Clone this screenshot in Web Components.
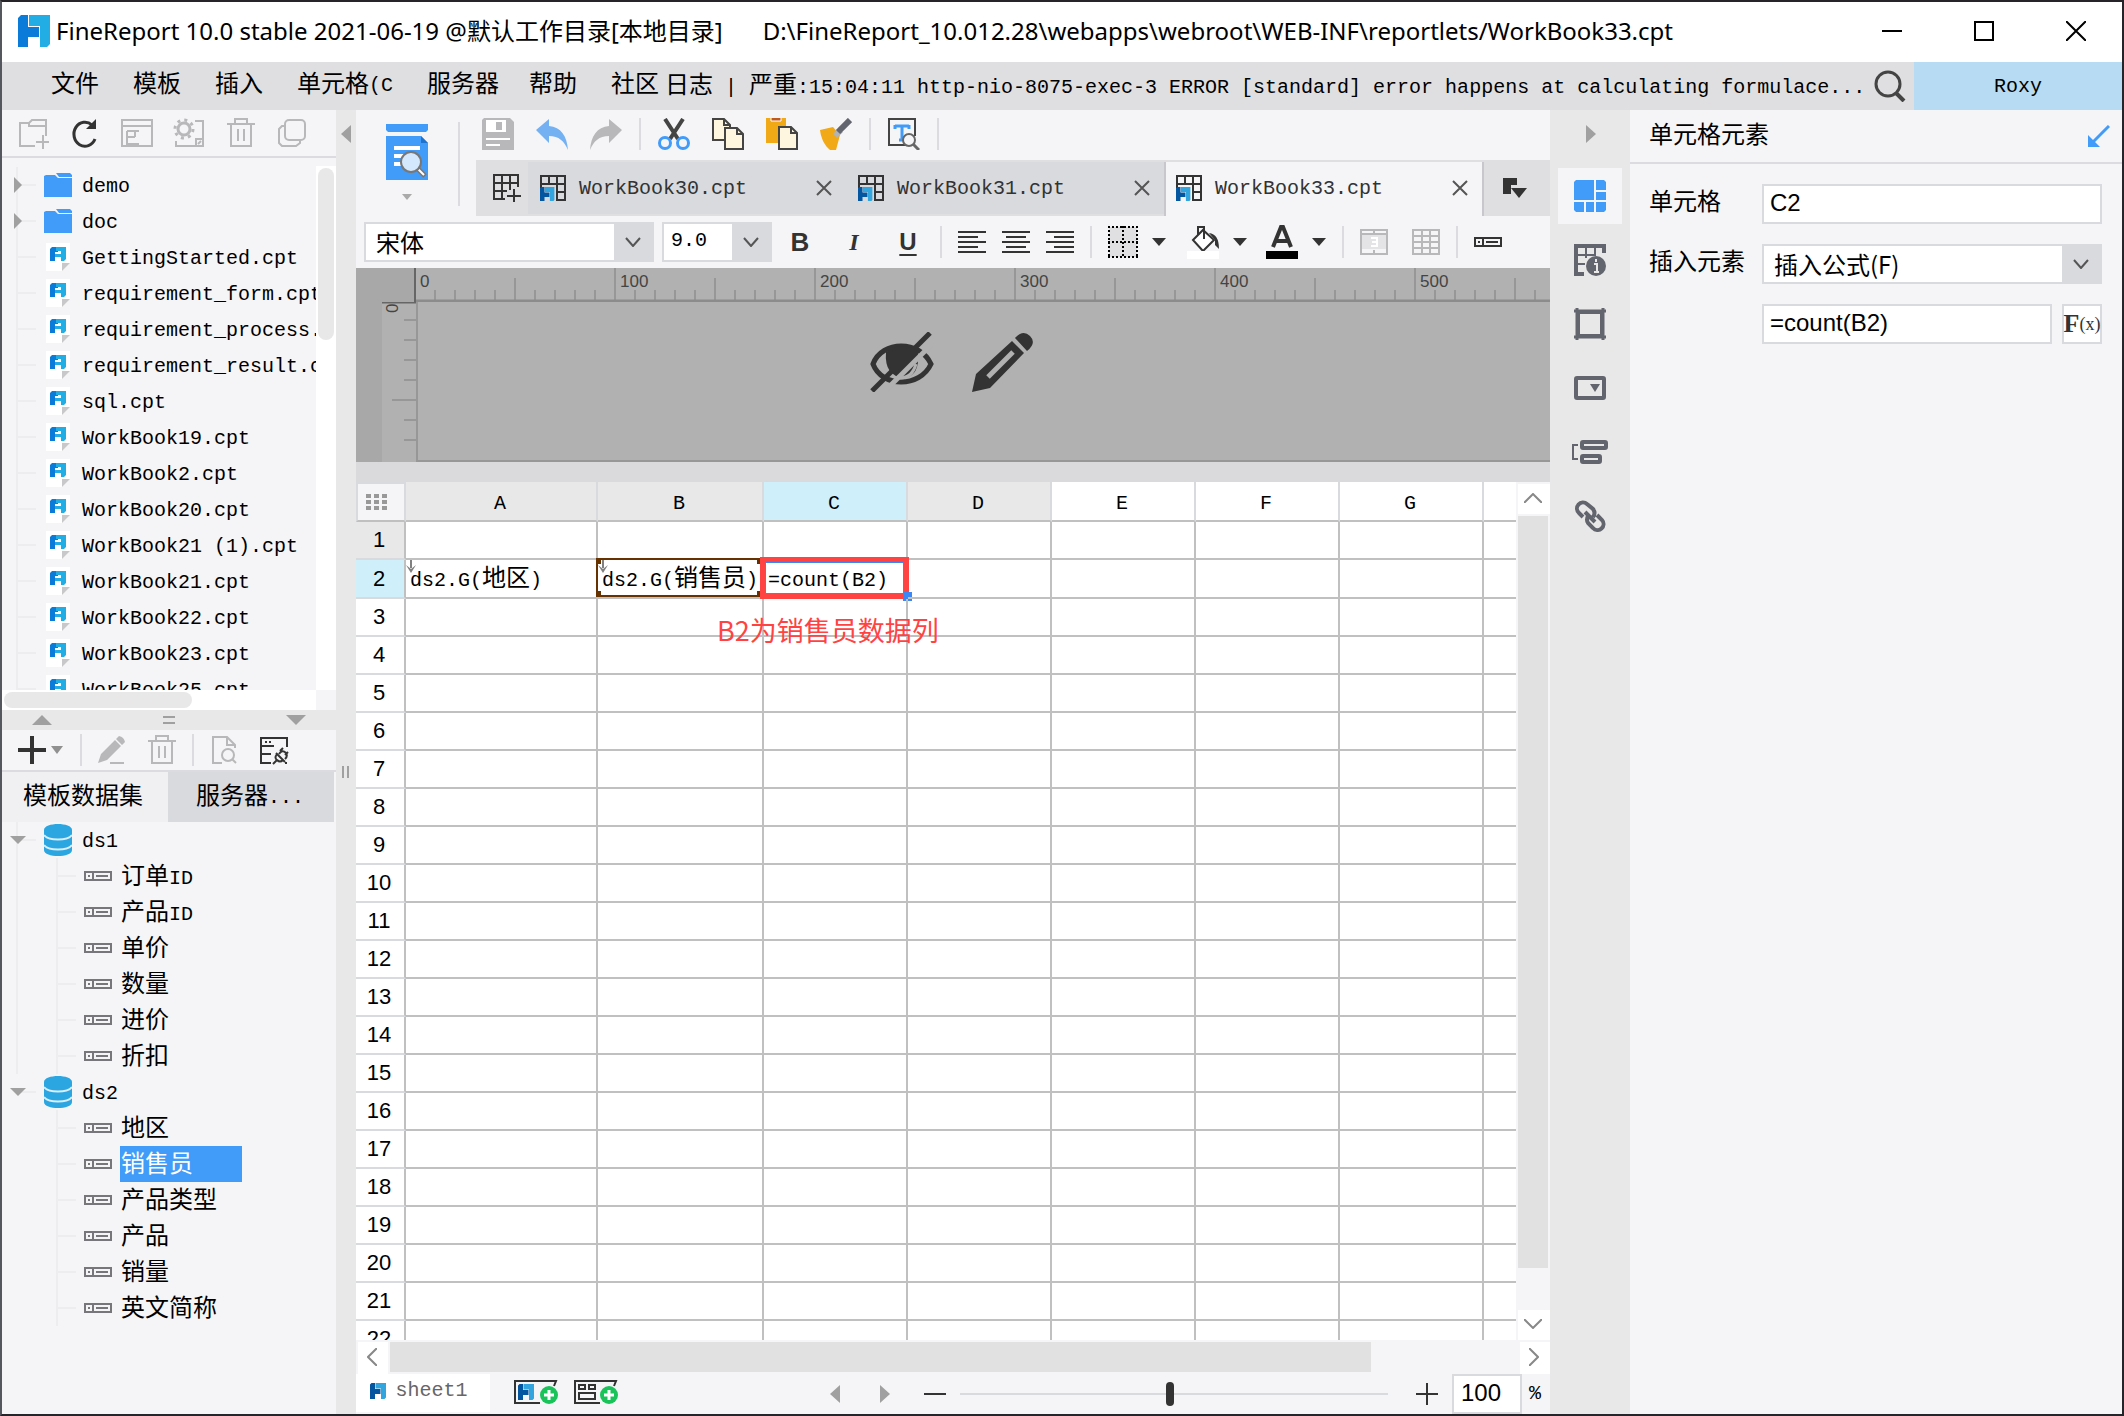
<!DOCTYPE html>
<html lang="zh-CN">
<head>
<meta charset="utf-8">
<title>FineReport</title>
<style>
  html, body { margin: 0; height: 100%; background: #f5f5f7; }
  body { font: 20px/36px "Liberation Mono", "Noto Sans CJK SC", monospace; color: #000; }
</style>
</head>
<body>
<report-designer></report-designer>

<script>
const G = "#b8b8ba";
const D = "#333";

const logo = (dark, light) =>
  `<path fill="${dark}" d="M3 0H10V12H21V22H10V32H0V3Z"/><path fill="${light}" d="M11 0H32V29L29 32H22V11H11Z"/>`;
const gridTab = `<g fill="none" stroke="${D}" stroke-width="2"><path d="M1 13V1H25V25H16M1 9H25M9 1V9M17 1V25M17 17H25"/></g>
  <g transform="translate(0 12) scale(.45)">${logo("#0456a0", "#33a5de")}</g>`;
const trash = `<g fill="none" stroke="${G}" stroke-width="2"><path d="M2 7H30M10 7V2H22V7M6 7V29H26V7M13 12V24M19 12V24"/></g>`;
const plusBadge = `<circle cx="35" cy="15" r="9" fill="#19c35a"/><path d="M35 10V20M30 15H40" stroke="#fff" stroke-width="3"/>`;

// name: [width, height, markup]
const ICONS = {
  logo: [32, 32, logo("#0a7bd8", "#22ade4")],
  logoSmall: [16, 16, `<g transform="scale(.5)">${logo("#0456a0", "#33a5de")}</g>`],
  minimize: [20, 20, `<path d="M0 10H20" stroke="#000" stroke-width="2"/>`],
  maximize: [20, 20, `<rect x="1" y="1" width="18" height="18" fill="none" stroke="#000" stroke-width="2"/>`],
  close: [20, 20, `<path d="M0 0L20 20M20 0L0 20" stroke="#000" stroke-width="2"/>`],
  search: [32, 32, `<circle cx="14" cy="14" r="12" fill="none" stroke="#444" stroke-width="3"/><path d="M22 23L30 31" stroke="#444" stroke-width="4"/>`],

  newFolder: [32, 32, `<g fill="none" stroke="${G}" stroke-width="2"><path d="M18 29H3V6H12M12 6L15 3H29V19M12 6V9H29M26 18V32M19 25H32"/></g>`],
  refresh: [32, 32, `<path d="M26 22A11 12 0 1 1 23 8" fill="none" stroke="${D}" stroke-width="3"/><path d="M27 2V12H17Z" fill="${D}"/>`],
  template: [32, 32, `<g fill="none" stroke="${G}" stroke-width="2"><path d="M1 3H31V29H1ZM1 9H31M6 14H18M6 27H18M6 14V28M7 20H14M14 14V20"/></g>`],
  gear: [32, 32, `<g fill="none" stroke="${G}"><circle cx="11" cy="12" r="6" stroke-width="3"/><circle cx="11" cy="12" r="9" stroke-width="3" stroke-dasharray="3 4.07"/><path stroke-width="2" d="M22 4H30V29H3V24M23 29V22H30M25 27L28 24"/></g>`],
  trash: [32, 32, trash],
  copyGray: [32, 32, `<g fill="none" stroke="${G}" stroke-width="2"><path d="M7 9H5L2 12V26L5 29H19L23 26V24"/><rect x="8" y="3" width="20" height="20" rx="4"/></g>`],
  folder: [28, 24, `<path fill="#419bf9" d="M0 3L2 2H11L14 5H28V24H0Z"/><path fill="#419bf9" d="M12 0H26L28 2V4H15Z"/>`],
  file: [24, 28, `<path fill="#fff" d="M0 0H24V20L16 28H0Z"/><path fill="#c8c8ca" d="M16 20H24L16 28Z"/>
    <path fill="#0a7bd8" d="M6 4H12V9H9V18H4V6Z"/><path fill="#22ade4" d="M10 4H20V16L18 18H15V14H9V11H15V8H10Z"/>`],
  toggleClosed: [10, 16, `<path d="M1 0L9 8L1 16Z" fill="#a0a0a0"/>`],
  toggleOpen: [16, 10, `<path d="M0 1H16L8 9Z" fill="#a0a0a0"/>`],
  db: [28, 32, `<path fill="#2ca6e0" d="M0 6C0-2 28-2 28 6V26C28 34 0 34 0 26Z"/><path d="M0 11C4 17 24 17 28 11M0 21C4 27 24 27 28 21" fill="none" stroke="#d8eef9" stroke-width="2"/>`],
  field: [28, 10, `<g fill="none" stroke="#77777b" stroke-width="2"><path d="M1 1H27V9H1ZM9 1V9M12 5H24M4 5H6"/></g>`],
  fieldDark: [28, 10, `<g fill="none" stroke="${D}" stroke-width="2"><path d="M1 1H27V9H1ZM9 1V9M12 5H24M4 5H6"/></g>`],
  up: [20, 10, `<path d="M0 10L10 0L20 10Z" fill="#a0a0a0"/>`],
  down: [20, 10, `<path d="M0 0H20L10 10Z" fill="#a0a0a0"/>`],
  grip: [12, 8, `<path d="M0 1H12M0 7H12" stroke="#a0a0a0" stroke-width="2"/>`],
  gripV: [8, 12, `<path d="M1 0V12M6 0V12" stroke="#a0a0a0" stroke-width="2"/>`],
  left: [10, 18, `<path d="M10 0V18L0 9Z" fill="#a0a0a0"/>`],
  right: [10, 18, `<path d="M0 0V18L10 9Z" fill="#a0a0a0"/>`],
  add: [32, 32, `<path d="M16 2V30M2 16H30" stroke="${D}" stroke-width="4"/>`],
  caretGray: [12, 8, `<path d="M0 0H12L6 8Z" fill="#909090"/>`],
  caretLight: [10, 8, `<path d="M0 1H10L5 7Z" fill="#aaa"/>`],
  caret: [14, 8, `<path d="M0 0H14L7 8Z" fill="${D}"/>`],
  pencilGray: [32, 32, `<path fill="${G}" d="M2 29L5 20L19 6L25 12L11 26ZM20 5L23 2Q28 3 29 8L26 11Z"/><path d="M14 29H28" stroke="${G}" stroke-width="2"/>`],
  docSearch: [32, 32, `<g fill="none" stroke="${G}" stroke-width="2"><path d="M14 29H5V3H19L27 11V14M19 3V11H27"/><circle cx="20" cy="21" r="6"/><path d="M24 25L28 29"/></g>`],
  dataEdit: [32, 32, `<g fill="none" stroke="${D}" stroke-width="2"><path d="M13 29H3V4H29V13M3 12H16M3 20H13M7 8H9M11 8H13M15 30L19 26M18 19L27 28M19 20Q16 24 19 26Q22 29 25 26M22 17L25 14M27 21L30 18M21 20Q24 15 28 19Q30 22 27 25M28 28V30"/></g>`],

  preview: [42, 56, `<path fill="#419bf9" d="M0 0H42V6L40 8H2L0 6ZM0 12H35L42 19V56H0Z"/><path fill="#1f73cc" d="M35 12L42 19H35Z"/>
    <path d="M8 24H34M8 32H18M8 40H16" stroke="#fff" stroke-width="4"/><path d="M31 44L39 52" stroke="#777" stroke-width="5"/><path d="M32 45L38 51" stroke="#fff" stroke-width="2"/>
    <circle cx="25" cy="38" r="10" fill="#d3e8fd" stroke="#777" stroke-width="2"/>`],
  save: [32, 32, `<path fill="#b8b8ba" d="M0 2L2 0H28L32 4V32H0Z"/><path fill="#fff" d="M4 2H24V14H4Z"/><path fill="#b8b8ba" d="M14 4H20V12H14Z"/><path d="M4 21H28M4 27H18" stroke="#fff" stroke-width="2"/>`],
  undo: [32, 32, `<path fill="#74b1f2" d="M0 12L13 1V8C25 9 31 18 32 32C28 23 23 18 13 18V25Z"/>`],
  redo: [32, 32, `<path fill="#b8b8ba" d="M32 12L19 1V8C7 9 1 18 0 32C4 23 9 18 19 18V25Z"/>`],
  cut: [32, 32, `<path d="M7 1L20 21M25 1L12 21" stroke="#444" stroke-width="4"/><g fill="none" stroke="#419bf9" stroke-width="3"><circle cx="7" cy="25" r="5.5"/><circle cx="25" cy="25" r="5.5"/></g>`],
  copy: [32, 32, `<g fill="#fff6e0" stroke="#444" stroke-width="2"><path d="M1 1H12L18 7V22H1Z"/><path d="M13 10H25L31 16V31H13Z"/><path fill="none" d="M12 1V7H18M25 10V16H31"/></g>`],
  paste: [32, 32, `<path fill="#f2a916" d="M0 0H20V25H0Z"/><path fill="#c05a1c" stroke="#fff" d="M5-1H15V3H5Z"/><g fill="#fff6e0" stroke="#444" stroke-width="2"><path d="M13 9H25L31 15V31H13Z"/><path fill="none" d="M25 9V15H31"/></g>`],
  brush: [32, 32, `<path fill="#f2a916" d="M0 12L13 9L20 17L16 32H10C4 27 1 20 0 12Z"/><path d="M16 13L20 17" stroke="#b0b3b8" stroke-width="8"/><path d="M18 14L30 2" stroke="#63656e" stroke-width="6"/>`],
  find: [32, 32, `<path d="M20 27H1V1H27V18" fill="none" stroke="#444" stroke-width="2"/><path d="M7 8H21M14 8V22M11 22H17M7 7V11M21 7V11" stroke="#419bf9" stroke-width="3"/><circle cx="21" cy="22" r="6" fill="#f5f5f7" stroke="#666" stroke-width="2"/><path d="M25 26L31 32" stroke="#666" stroke-width="3"/>`],
  gridNew: [28, 28, `<g fill="none" stroke="${D}" stroke-width="2"><path d="M12 25H1V1H25V13M1 9H25M1 17H14M9 1V25M17 1V16M21 15V28M14 22H28"/></g>`],
  gridTab: [26, 26, gridTab],
  tabClose: [16, 16, `<path d="M1 1L15 15M15 1L1 15" stroke="#555" stroke-width="2"/>`],
  tabList: [24, 20, `<path fill="${D}" d="M0 0H14V7H8V16H0Z"/><path fill="${D}" d="M8 10H24L16 20Z"/>`],
  chevron: [16, 10, `<path d="M1 1L8 9L15 1" fill="none" stroke="#555" stroke-width="2"/>`],
  alignLeft: [28, 24, `<path d="M0 2H28M0 7H20M0 12H28M0 17H20M0 22H28" stroke="${D}" stroke-width="2"/>`],
  alignCenter: [28, 24, `<path d="M0 2H28M4 7H24M0 12H28M4 17H24M0 22H28" stroke="${D}" stroke-width="2"/>`],
  alignRight: [28, 24, `<path d="M0 2H28M8 7H28M0 12H28M8 17H28M0 22H28" stroke="${D}" stroke-width="2"/>`],
  borders: [30, 32, `<rect x="1" y="1" width="28" height="30" fill="#e0e0e2"/><path d="M0 1H30M0 31H30M0 16H30M1 0V32M29 0V32M15 0V32" stroke="#000" stroke-width="2" stroke-dasharray="2 2"/>`],
  bucket: [32, 34, `<path d="M6 15L16 5L27 15L16 26Z" fill="#fff" stroke="${D}" stroke-width="2"/><path d="M11 10V2H17V14" fill="none" stroke="${D}" stroke-width="2"/><path fill="${D}" d="M22 8Q32 9 32 24L28 20V15Z"/><path fill="#fff" d="M0 26H32V34H0Z"/>`],
  fontColor: [32, 34, `<path d="M7 22L15 2H17L25 22M10 16H22" fill="none" stroke="${D}" stroke-width="4"/><path d="M0 26H32V34H0Z"/>`],
  merge: [28, 26, `<path fill="#e4e4e6" d="M1 6H27V20H1Z"/><g fill="none" stroke="${G}" stroke-width="2"><path d="M1 1H27V25H1ZM1 5H27M14 1V5M14 21V25"/></g><path d="M11 9H17V17H11M12 13H17" fill="none" stroke="#fff" stroke-width="2"/>`],
  gridGray: [28, 26, `<path d="M1 1H27V25H1ZM1 7H27M1 13H27M1 19H27M10 1V25M18 1V25" fill="none" stroke="${G}" stroke-width="2"/>`],
  eyeOff: [64, 60, `<path d="M3 32C12 8 50 8 61 32C50 56 12 56 3 32Z" fill="none" stroke="${D}" stroke-width="5"/><path fill="${D}" d="M16 20Q32 8 48 20Q50 44 34 46Q14 44 16 20Z"/><path d="M68 6L8 66" stroke="#b1b1b1" stroke-width="5"/><path d="M60 1L2 59" stroke="${D}" stroke-width="5"/><path d="M30 46Q42 46 46 32" fill="none" stroke="#b1b1b1" stroke-width="3"/>`],
  pencil: [62, 60, `<path fill="${D}" d="M0 60L4 42L40 9L52 21L18 56ZM43 6Q51-3 58 4Q65 11 55 19Z"/><path d="M16 45L41 20" stroke="#b1b1b1" stroke-width="5"/>`],

  expand: [22, 22, `<path d="M21 1L5 17" stroke="#419bf9" stroke-width="3"/><path d="M0 10V22H12Z" fill="#419bf9"/>`],
  cells: [32, 32, `<path fill="#419bf9" d="M0 2L2 0H20V20H0ZM22 0H30L32 2V10H22ZM22 12H32V20H22ZM0 22H10V32H2L0 30ZM12 22H20V32H12ZM22 22H32V30L30 32H22Z"/>`],
  cellInfo: [32, 32, `<g fill="none" stroke="#63656e"><path stroke-width="4" d="M10 30H2V2H30V9"/><path stroke-width="2" d="M4 11H22M4 20H11M12 4V14M21 4V10"/></g><circle cx="22" cy="22" r="10" fill="#63656e"/><path d="M22 15V18M20 20H23V27M20 28H25" stroke="#e8e8e8" stroke-width="2" fill="none"/>`],
  frame: [32, 32, `<g stroke="#63656e" fill="none"><path stroke-width="4" d="M4 4H28V28H4Z"/><path stroke-width="3" d="M0 3H32M0 29H32M3 0V32M29 0V32"/></g><path fill="#e8e8e8" d="M6 6H26V26H6Z"/>`],
  widget: [32, 24, `<rect x="2" y="2" width="28" height="20" rx="1" fill="none" stroke="#63656e" stroke-width="4"/><path fill="#63656e" d="M16 8H26L21 16Z"/>`],
  outline: [36, 24, `<g fill="none" stroke="#63656e"><path stroke-width="2" d="M6 5H1V19H6"/><rect x="10" y="2" width="24" height="6" stroke-width="4" rx="1"/><rect x="10" y="16" width="18" height="6" stroke-width="4" rx="1"/></g>`],
  link: [32, 32, `<g fill="none" stroke="#63656e" stroke-width="4"><path d="M9 17L5 13A6 6 0 0 1 13 4L19 9Q22 13 19 17M23 15L28 20A6 6 0 0 1 19 28L14 23Q12 20 14 16M11 12L21 22"/></g>`],

  corner: [22, 16, `<path d="M0 2H22M0 8H22M0 14H22" stroke="#999" stroke-width="4" stroke-dasharray="5 3"/>`],
  expandDown: [10, 14, `<path d="M5 0V8" stroke="#808080" stroke-width="2"/><path d="M0 5L5 13L10 5L5 9Z" fill="#808080"/>`],
  arrowUp: [18, 10, `<path d="M0 10L9 1L18 10" fill="none" stroke="#888" stroke-width="2"/>`],
  arrowDown: [18, 10, `<path d="M0 0L9 9L18 0" fill="none" stroke="#888" stroke-width="2"/>`],
  arrowLeft: [10, 18, `<path d="M10 0L1 9L10 18" fill="none" stroke="#888" stroke-width="2"/>`],
  arrowRight: [10, 18, `<path d="M0 0L9 9L0 18" fill="none" stroke="#888" stroke-width="2"/>`],
  addSheet: [44, 24, `<path d="M26 23H1V1H42L40 6" fill="none" stroke="${D}" stroke-width="2"/><g transform="translate(4 4) scale(.5)">${logo("#0456a0", "#33a5de")}</g>${plusBadge}`],
  addForm: [44, 24, `<path d="M26 23H1V1H42L40 6M5 5H11V9H5ZM15 5H21V9H15ZM5 13H21V19H5Z" fill="none" stroke="${D}" stroke-width="2"/>${plusBadge}`],
  minus: [22, 22, `<path d="M0 11H22" stroke="${D}" stroke-width="2"/>`],
  plus: [22, 22, `<path d="M0 11H22M11 0V22" stroke="${D}" stroke-width="2"/>`],
};

const BASE = `
  *, :host { box-sizing: border-box; }
  button, input, select { font: inherit; color: inherit; margin: 0; border: 0; padding: 0; background: none; border-radius: 0; outline: none; }
  button { display: flex; align-items: center; justify-content: center; }
  .cjk { font-size: 24px; }
  .sep { flex: none; width: 2px; height: 32px; background: #dcdce0; }
`;

// Chinese runs are set larger than the half-width Latin beside them
const mix = (text) => text.replace(/[\u4e00-\u9fff]+/g, (run) => `<span class="cjk">${run}</span>`);
const icon = (name) => `<svg-icon name="${name}"></svg-icon>`;
const iconButton = (name, label) => `<button aria-label="${label}">${icon(name)}</button>`;

class BaseElement extends HTMLElement {
  constructor() {
    super();
    this.attachShadow({ mode: "open" });
  }

  connectedCallback() {
    this.shadowRoot.innerHTML = `<style>${BASE}${this.styles()}</style>${this.render()}`;
  }

  styles() { return ""; }
  render() { return "<slot></slot>"; }
}

class SvgIcon extends BaseElement {
  styles() { return ":host { display: block; flex: none; } svg { display: block; }"; }
  render() {
    const [w, h, body] = ICONS[this.getAttribute("name")];
    return `<svg width="${w}" height="${h}" viewBox="0 0 ${w} ${h}" aria-hidden="true">${body}</svg>`;
  }
}

class TitleBar extends BaseElement {
  styles() {
    return `
      :host { display: flex; align-items: center; height: 60px; padding: 0 36px 2px 16px; background: #fff; font: 24px/30px "Noto Sans", "Noto Sans CJK SC", sans-serif; white-space: pre; }
      .name { margin: 0 40px 0 6px; }
      .path { flex: 1; overflow: hidden; }
      .buttons { display: flex; gap: 72px; }
    `;
  }
  render() {
    return `${icon("logo")}
      <span class="name">FineReport 10.0 stable 2021-06-19 @默认工作目录[本地目录]</span>
      <span class="path">D:\\FineReport_10.012.28\\webapps\\webroot\\WEB-INF\\reportlets/WorkBook33.cpt</span>
      <div class="buttons">${iconButton("minimize", "最小化")}${iconButton("maximize", "最大化")}${iconButton("close", "关闭")}</div>`;
  }
}

class MenuBar extends BaseElement {
  styles() {
    return `
      :host { display: flex; align-items: center; height: 48px; padding-left: 32px; background: #dfdfe1; white-space: pre; }
      nav { display: flex; flex: none; }
      nav button { margin: 0 17px; justify-content: flex-start; }
      .cell { width: 96px; }
      .server { width: 68px; }
      .community { margin-right: 6px; }
      .log { flex: 1; min-width: 0; overflow: hidden; padding-top: 2px; }
      .find { width: 48px; }
      .user { width: 208px; height: 100%; background: #b6dbf2; padding-top: 2px; }
    `;
  }
  render() {
    return `<nav>
        <button>${mix("文件")}</button><button>${mix("模板")}</button><button>${mix("插入")}</button>
        <button class="cell">${mix("单元格(C")}</button><button class="server">${mix("服务器")}</button>
        <button>${mix("帮助")}</button><button class="community">${mix("社区")}</button>
      </nav>
      <span class="log">${mix("日志 | 严重:15:04:11 http-nio-8075-exec-3 ERROR [standard] error happens at calculating formulace...")}</span>
      <button class="find" aria-label="搜索">${icon("search")}</button>
      <button class="user">Roxy</button>`;
  }
}

class TreeRow extends BaseElement {
  styles() {
    return `
      :host { display: flex; position: relative; align-items: center; height: 36px; padding-left: 8px; white-space: pre; }
      :host::before, :host::after { content: ""; position: absolute; left: 14px; background: #ededf0; }
      :host::before { top: 0; bottom: 0; width: 2px; }
      :host::after { top: 17px; width: 20px; height: 2px; }
      :host([level="1"])::after { left: 54px; }
      :host([last])::before { display: none; }
      .branch { position: absolute; left: 54px; top: 0; bottom: 0; width: 2px; background: #ededf0; }
      .toggle { position: relative; z-index: 1; display: flex; justify-content: center; flex: none; width: 16px; margin-right: 18px; }
      .icon { display: flex; justify-content: center; flex: none; width: 28px; margin-right: 10px; }
      .label { flex: none; height: 36px; padding-top: 2px; }
      :host([level="1"]) .toggle { margin-right: 58px; }
      :host([level="1"]) .icon { margin-right: 8px; }
      :host([level="1"]) .label { padding-left: 1px; }
      :host([selected]) .label { background: #419bf9; color: #fff; padding-right: 49px; }
    `;
  }
  render() {
    const toggle = this.getAttribute("toggle");
    return `${this.getAttribute("level") ? '<i class="branch"></i>' : ""}
      <span class="toggle">${toggle ? icon(toggle) : ""}</span>
      <span class="icon">${icon(this.getAttribute("icon"))}</span>
      <span class="label">${mix(this.getAttribute("label"))}</span>`;
  }
}

class FilePanel extends BaseElement {
  styles() {
    return `
      :host { display: flex; flex-direction: column; flex: none; }
      .tools { display: flex; gap: 20px; height: 48px; padding: 0 15px; border-bottom: 2px solid #dcdce0; }
      .body { display: grid; grid-template-columns: minmax(0, 1fr) 20px; grid-template-rows: 524px 20px; padding-top: 8px; }
      .list { overflow: hidden; padding-top: 1px; }
      .bar { background: #fff; padding: 2px; }
      .bar i { display: block; background: #e8e8e8; border-radius: 8px; }
      .v i { height: 172px; }
      .h i { width: 188px; height: 16px; }
    `;
  }
  render() {
    const files = ["GettingStarted", "requirement_form", "requirement_process", "requirement_result", "sql", "WorkBook19",
      "WorkBook2", "WorkBook20", "WorkBook21 (1)", "WorkBook21", "WorkBook22", "WorkBook23", "WorkBook25"];
    const tools = [["newFolder", "新建文件夹"], ["refresh", "刷新"], ["template", "模板"], ["gear", "设置"], ["trash", "删除"], ["copyGray", "复制"]];
    return `<div class="tools">${tools.map(([n, l]) => iconButton(n, l)).join("")}</div>
      <div class="body">
        <div class="list">
          ${["demo", "doc"].map((f) => `<tree-row toggle="toggleClosed" icon="folder" label="${f}"></tree-row>`).join("")}
          ${files.map((f) => `<tree-row icon="file" label="${f}.cpt"></tree-row>`).join("")}
        </div>
        <div class="bar v"><i></i></div>
        <div class="bar h"><i></i></div>
      </div>`;
  }
}

class DataPanel extends BaseElement {
  styles() {
    return `
      :host { display: flex; flex-direction: column; flex: 1; min-height: 0; }
      .split { display: flex; justify-content: space-between; align-items: center; height: 20px; padding: 0 30px; background: #e8e8e8; }
      .tools { display: flex; align-items: center; height: 42px; padding: 0 14px; border-bottom: 2px solid #dcdce0; gap: 14px; }
      .add { width: 50px; justify-content: flex-start; gap: 3px; }
      .pair { display: flex; gap: 18px; }
      .tabs { display: grid; grid-template-columns: 1fr 1fr; height: 50px; padding-right: 2px; }
      .tabs button { background: #d9dadd; white-space: pre; justify-content: flex-start; padding: 2px 0 0 28px; }
      .tabs .on { background: #f0f0f2; padding-left: 21px; }
      .list { flex: 1; min-height: 0; overflow: hidden; }
    `;
  }
  render() {
    const sets = [
      ["ds1", ["订单ID", "产品ID", "单价", "数量", "进价", "折扣"]],
      ["ds2", ["地区", "销售员", "产品类型", "产品", "销量", "英文简称"]],
    ];
    const rows = sets.map(([name, fields]) => {
      const last = name === "ds2" ? "last" : "";
      return `<tree-row toggle="toggleOpen" icon="db" label="${name}" ${last}></tree-row>` +
        fields.map((f) => `<tree-row level="1" icon="field" label="${f}" ${last} ${f === "销售员" ? "selected" : ""}></tree-row>`).join("");
    }).join("");
    return `<div class="split">${icon("up")}${icon("grip")}${icon("down")}</div>
      <div class="tools">
        <button class="add" aria-label="新建数据集">${icon("add")}${icon("caretGray")}</button><i class="sep"></i>
        <div class="pair">${iconButton("pencilGray", "编辑")}${iconButton("trash", "删除")}</div><i class="sep"></i>
        <div class="pair">${iconButton("docSearch", "预览")}${iconButton("dataEdit", "连接")}</div>
      </div>
      <div class="tabs" role="tablist">
        <button class="on" role="tab">${mix("模板数据集")}</button><button role="tab">${mix("服务器...")}</button>
      </div>
      <div class="list">${rows}</div>`;
  }
}

class ComboBox extends BaseElement {
  styles() {
    return `
      :host { display: grid; grid-template-columns: 1fr 38px; height: 40px; border: 2px solid #d9dadd; background: #d9dadd; }
      select { grid-area: 1 / 1 / 2 / 3; width: 100%; height: 36px; appearance: none; padding: 0 48px 3px var(--combo-indent, 10px); background: linear-gradient(#fff, #fff) no-repeat 0 0 / calc(100% - 38px) 100%; font: var(--combo-font, 24px "Noto Sans CJK SC", sans-serif); }
      svg-icon { grid-area: 1 / 2; place-self: center; pointer-events: none; }
    `;
  }
  render() {
    return `<select aria-label="${this.getAttribute("label")}"><option>${this.getAttribute("value")}</option></select>${icon("chevron")}`;
  }
}

class MainToolbar extends BaseElement {
  styles() {
    return `
      :host { display: grid; grid-template-columns: 120px 1fr; height: 106px; }
      .preview { flex-direction: column; justify-content: flex-start; gap: 13px; padding: 14px 18px 0 0; position: relative; }
      .preview::after { content: ""; position: absolute; right: 16px; top: 12px; width: 2px; height: 84px; background: #dcdce0; }
      .icons { display: flex; gap: 22px; align-items: center; height: 50px; padding: 0 0 2px 6px; }
      .icons .sep { margin: 0 -5px; }
      .tabs { display: flex; height: 56px; background: #dfdfe1; color: #333; }
      .new { width: 52px; padding-left: 10px; }
      .tab { display: flex; align-items: center; flex: 0 1 318px; min-width: 0; margin: 2px 0; padding: 0 14px 0 12px; background: #d9dadd; }
      .tab button:first-child { flex: 1; gap: 13px; justify-content: flex-start; }
      .tab span { padding-top: 2px; }
      .tab.on { flex-basis: 320px; margin-bottom: 0; padding-left: 10px; background: #f5f5f7; border: solid #c8c8cc; border-width: 0 2px; padding-bottom: 2px; }
      .list { flex: 1; padding-right: 4px; }
    `;
  }
  render() {
    const groups = [
      [["save", "保存"], ["undo", "撤销"], ["redo", "重做"]],
      [["cut", "剪切"], ["copy", "复制"], ["paste", "粘贴"], ["brush", "格式刷"]],
      [["find", "查找"]],
    ];
    const tabs = ["WorkBook30.cpt", "WorkBook31.cpt", "WorkBook33.cpt"];
    return `<button class="preview" aria-label="预览">${icon("preview")}${icon("caretLight")}</button>
      <div>
        <div class="icons">${groups.map((g) => g.map(([n, l]) => iconButton(n, l)).join("") + '<i class="sep"></i>').join("")}</div>
        <div class="tabs">
          <button class="new" aria-label="新建">${icon("gridNew")}</button>
          ${tabs.map((t, i) => `<div class="tab ${i === 2 ? "on" : ""}"><button>${icon("gridTab")}<span>${t}</span></button>${iconButton("tabClose", "关闭")}</div>`).join("")}
          <button class="list" aria-label="全部标签">${icon("tabList")}</button>
        </div>
      </div>`;
  }
}

class FormatBar extends BaseElement {
  styles() {
    return `
      :host { display: flex; align-items: center; height: 52px; padding-left: 8px; color: #333; }
      .font { width: 290px; color: #000; }
      .size { width: 110px; margin: 0 12px 0 8px; color: #000; --combo-font: 20px "Liberation Mono", monospace; --combo-indent: 7px; }
      .group { display: flex; align-items: center; }
      .sep { margin: 0 16px; }
      .text { gap: 22px; font: 24px/32px "Liberation Serif", serif; }
      .text button { width: 32px; }
      .b { font: bold 26px/32px "Liberation Sans", sans-serif; }
      .i { font-style: italic; font-weight: bold; }
      .u { font-family: "Liberation Sans", sans-serif; font-weight: bold; text-decoration: underline; text-underline-offset: 4px; }
      .align { gap: 16px; }
      .drop { gap: 19px; }
      .drop button { gap: 14px; width: 60px; justify-content: flex-start; }
      .cells { gap: 24px; }
    `;
  }
  render() {
    return `<combo-box class="font" label="字体" value="宋体"></combo-box><combo-box class="size" label="字号" value="9.0"></combo-box>
      <div class="group text"><button class="b">B</button><button class="i">I</button><button class="u">U</button></div><i class="sep"></i>
      <div class="group align">${iconButton("alignLeft", "左对齐")}${iconButton("alignCenter", "居中")}${iconButton("alignRight", "右对齐")}</div><i class="sep"></i>
      <div class="group drop">
        ${[["borders", "边框"], ["bucket", "填充"], ["fontColor", "文字颜色"]].map(([n, l]) => `<button aria-label="${l}">${icon(n)}${icon("caret")}</button>`).join("")}
      </div><i class="sep"></i>
      <div class="group cells">${iconButton("merge", "合并")}${iconButton("gridGray", "取消合并")}</div><i class="sep"></i>
      ${iconButton("fieldDark", "控件")}`;
  }
}

class ParamPane extends BaseElement {
  connectedCallback() {
    super.connectedCallback();
    this.observer = new ResizeObserver(() => this.drawRuler());
    this.observer.observe(this);
  }

  disconnectedCallback() {
    this.observer.disconnect();
  }

  // ten pixels of ruler value are drawn as twenty on the screen
  drawRuler() {
    const width = this.clientWidth - 60;
    let ticks = "", labels = "";
    for (let x = 0, i = 0; x < width; x += 20, i++) {
      if (i) ticks += `M${x - 1} ${i % 10 === 0 ? 0 : i % 5 === 0 ? 10 : 22}V32`;
      if (i % 10 === 0 && x + 40 < width) labels += `<text x="${x + 4}" y="19">${i * 10}</text>`;
    }
    this.shadowRoot.querySelector(".ruler").innerHTML =
      `<path class="ticks" d="${ticks}"/><path d="M0 33H${width}" stroke="#8c8c8c" stroke-width="3"/>${labels}`;
  }

  styles() {
    return `
      :host { display: grid; grid-template: 34px 160px / 26px 34px 1fr; flex: none; overflow: hidden; background: #b1b1b1; }
      .corner { grid-column: 1 / 3; background: #a8a8a8; border-right: 2px solid #666; }
      .side { background: #a8a8a8; }
      svg { display: block; width: 100%; height: 100%; }
      text { font: 17px "Liberation Sans", sans-serif; fill: #444; }
      .ticks { stroke: #979797; stroke-width: 2; }
      .canvas { display: flex; justify-content: center; align-items: flex-start; gap: 38px; padding: 30px 64px 0 0; border: solid #979797; border-width: 0 0 2px 2px; }
    `;
  }
  render() {
    let v = "";
    for (let i = 1; i < 8; i++) v += `M${i === 5 ? 10 : 22} ${i * 20 - 2}H34`;
    return `<div class="corner"></div>
      <svg class="ruler"></svg>
      <div class="side"></div>
      <svg><path d="M0 0H34" stroke="#666" stroke-width="3"/><path class="ticks" d="${v}"/><text transform="translate(16 11) rotate(-90)">0</text></svg>
      <div class="canvas">${icon("eyeOff")}${icon("pencil")}</div>`;
  }
}

class SheetGrid extends BaseElement {
  styles() {
    return `
      :host { display: grid; grid-template: minmax(0, 1fr) 34px / minmax(0, 1fr) 34px; flex: 1; min-height: 0; border-top: 20px solid #dadadc; background: #f5f5f7; }
      .cells { overflow: hidden; background: #fff; }
      table { width: 100%; table-layout: fixed; border-spacing: 0; }
      th, td { height: 38px; padding: 0; border: solid #c0c0c0; border-width: 0 2px 2px 0; line-height: 32px; white-space: pre; }
      th { font-weight: normal; text-align: center; border-bottom-color: #d9dadd; }
      thead th { height: 40px; padding: 5px 2px 0 0; border-right-color: #d9dadd; border-bottom-color: #c0c0c0; }
      th.used { background: #e8e8e8; }
      th.on { background: #cff0fb; }
      th svg-icon { width: 22px; margin-left: 8px; }
      tbody th { font: 22px/32px "Liberation Sans", sans-serif; padding-right: 2px; }
      thead th.corner { padding: 0; background: #f5f5f7; border-left: 2px solid #d9dadd; border-top: 2px solid #d9dadd; }
      td { position: relative; text-align: left; padding: 4px 0 0 4px; }
      tr > :last-child { border-right: 0; }
      .mark { position: absolute; left: 0; top: 0; }
      .ref::before { content: ""; position: absolute; inset: -2px 0 0 -2px; border: 2px solid #663300;
        background: linear-gradient(#630, #630) 0 0, linear-gradient(#630, #630) 100% 0, linear-gradient(#630, #630) 0 100%, linear-gradient(#630, #630) 100% 100%; background-size: 3px 4px; background-repeat: no-repeat; }
      .picked::before { content: ""; position: absolute; inset: -3px -3px -2px -4px; border: 5px solid #ff4343; box-shadow: inset 0 0 0 1px #3b87f5; }
      .picked::after { content: ""; position: absolute; right: -6px; bottom: -4px; width: 9px; height: 9px; background: #3b87f5; }
      .note { position: absolute; z-index: 1; left: -47px; top: 14px; font: 27px/34px "Noto Sans CJK SC", sans-serif; color: #ff4343; }
      .v { display: grid; grid-template-rows: 30px 1fr 30px; gap: 2px; padding: 2px 0 0 2px; }
      .v i { height: 95%; margin-right: 2px; background: #e1e1e1; }
      .h { display: grid; grid-template-columns: 30px 1fr 30px; gap: 2px; padding: 2px 0 0 2px; grid-column: 1 / 3; }
      .h i { width: 87%; margin-bottom: 2px; background: #e1e1e1; }
      .v button, .h button { background: #fff; padding: 0 2px 2px 0; }
    `;
  }
  cell(col, row) {
    const mark = `<span class="mark">${icon("expandDown")}</span>`;
    if (row === 2 && col === "A") return `<td>${mark}${mix("ds2.G(地区)")}</td>`;
    if (row === 2 && col === "B") return `<td class="ref">${mark}${mix("ds2.G(销售员)")}</td>`;
    if (row === 2 && col === "C") return `<td class="picked">=count(B2)</td>`;
    if (row === 3 && col === "C") return `<td><span class="note">B2为销售员数据列</span></td>`;
    return "<td></td>";
  }
  render() {
    const cols = ["A", "B", "C", "D", "E", "F", "G", ""];
    const widths = [50, 192, 166, 144, 144, 144, 144, 144];
    const used = ["A", "B", "D"];
    let rows = "";
    for (let r = 1; r <= 22; r++) {
      rows += `<tr><th class="${r === 2 ? "on" : r === 1 ? "used" : ""}">${r}</th>${cols.map((c) => this.cell(c, r)).join("")}</tr>`;
    }
    return `<div class="cells"><table>
        <colgroup>${widths.map((w) => `<col style="width: ${w}px">`).join("")}<col></colgroup>
        <thead><tr><th class="corner">${icon("corner")}</th>${cols.map((c) => `<th class="${c === "C" ? "on" : used.includes(c) ? "used" : ""}">${c}</th>`).join("")}</tr></thead>
        <tbody>${rows}</tbody>
      </table></div>
      <div class="v">${iconButton("arrowUp", "向上")}<i></i>${iconButton("arrowDown", "向下")}</div>
      <div class="h">${iconButton("arrowLeft", "向左")}<i></i>${iconButton("arrowRight", "向右")}</div>`;
  }
}

class StatusBar extends BaseElement {
  styles() {
    return `
      :host { display: flex; align-items: center; flex: none; height: 40px; }
      .sheet { align-self: flex-start; gap: 9px; width: 134px; height: 38px; padding: 0 8px 4px 0; background: #fff; color: #666; }
      .adds { display: flex; gap: 16px; margin: 0 auto 4px 24px; }
      .nav { display: flex; gap: 40px; margin-right: 34px; }
      input[type=range] { appearance: none; width: 428px; height: 24px; margin: 0 28px 0 14px; background: linear-gradient(#d9dadd, #d9dadd) no-repeat center / 100% 2px; }
      input[type=range]::-webkit-slider-thumb { appearance: none; width: 8px; height: 24px; border-radius: 4px; background: #333; }
      .zoom { width: 70px; height: 40px; margin: 0 7px 0 14px; padding: 0 0 2px 7px; border: 2px solid #d9dadd; background: #fff; font: 24px "Liberation Sans", sans-serif; }
      label { width: 21px; }
    `;
  }
  render() {
    return `<button class="sheet">${icon("logoSmall")}sheet1</button>
      <div class="adds">${iconButton("addSheet", "添加工作表")}${iconButton("addForm", "添加表单")}</div>
      <div class="nav">${iconButton("left", "上一个")}${iconButton("right", "下一个")}</div>
      ${iconButton("minus", "缩小")}
      <input type="range" min="0" max="100" value="49" aria-label="缩放">
      ${iconButton("plus", "放大")}
      <input class="zoom" id="zoom" value="100"><label for="zoom">%</label>`;
  }
}

class SideStrip extends BaseElement {
  styles() {
    return `
      :host { display: flex; flex-direction: column; align-items: center; flex: none; width: 80px; background: #e8e8e8; gap: 8px; }
      button { width: 64px; height: 56px; }
      .fold { height: 50px; padding: 0 0 2px 2px; }
      .on { background: #f5f5f7; }
    `;
  }
  render() {
    const items = [["cells", "单元格元素"], ["cellInfo", "单元格属性"], ["frame", "悬浮元素"], ["widget", "控件设置"], ["outline", "条件属性"], ["link", "超级链接"]];
    return `<button class="fold" aria-label="收起">${icon("right")}</button>
      ${items.map(([n, l], i) => `<button class="${i ? "" : "on"}" aria-label="${l}">${icon(n)}</button>`).join("")}`;
  }
}

class PropertyPanel extends BaseElement {
  styles() {
    return `
      :host { display: block; flex: none; width: 492px; }
      header { display: flex; align-items: center; justify-content: space-between; height: 54px; padding: 0 12px 0 19px; border-bottom: 2px solid #dcdce0; }
      header span, label { padding-top: 2px; }
      form { display: grid; grid-template-columns: 103px 1fr 40px; gap: 20px 10px; padding: 20px 20px 0 19px; align-items: center; }
      label { height: 40px; white-space: pre; }
      input, .fx { width: 100%; height: 40px; border: 2px solid #d9dadd; background: #fff; }
      input { padding: 0 0 2px 6px; font: 24px "Liberation Sans", sans-serif; }
      .wide { grid-column: 2 / 4; }
      .formula { grid-column: 2; }
      .fx { font: bold 26px/36px "Liberation Serif", serif; color: #333; }
      .fx small { font-size: 18px; font-weight: normal; }
    `;
  }
  render() {
    return `<header>${mix("单元格元素")}${iconButton("expand", "弹出")}</header>
      <form>
        <label for="cell">${mix("单元格")}</label><input class="wide" id="cell" value="C2">
        <label for="insert">${mix("插入元素")}</label><combo-box class="wide" id="insert" label="插入元素" value="插入公式(F)"></combo-box>
        <input class="formula" value="=count(B2)" aria-label="公式"><button class="fx" type="button">F<small>(x)</small></button>
      </form>`;
  }
}

class ReportDesigner extends BaseElement {
  styles() {
    return `
      :host { display: flex; flex-direction: column; height: 100vh; border: 2px solid #262428; border-left-color: #55575e; background: #f5f5f7; overflow: hidden; }
      title-bar, menu-bar { flex: none; }
      .work { display: flex; flex: 1; min-height: 0; }
      .left { display: flex; flex-direction: column; flex: none; width: 334px; }
      .fold { position: relative; display: flex; flex-direction: column; align-items: center; justify-content: center; flex: none; width: 20px; padding-top: 20px; background: #e8e8e8; }
      .fold button { position: absolute; left: 5px; top: 15px; }
      main { display: flex; flex-direction: column; flex: 1; min-width: 0; }
      main-toolbar, format-bar { flex: none; }
    `;
  }
  render() {
    return `<title-bar></title-bar>
      <menu-bar></menu-bar>
      <div class="work">
        <div class="left"><file-panel></file-panel><data-panel></data-panel></div>
        <div class="fold">${iconButton("left", "收起")}${icon("gripV")}</div>
        <main>
          <main-toolbar></main-toolbar><format-bar></format-bar><param-pane></param-pane><sheet-grid></sheet-grid><status-bar></status-bar>
        </main>
        <side-strip></side-strip>
        <property-panel></property-panel>
      </div>`;
  }
}

customElements.define("svg-icon", SvgIcon);
customElements.define("title-bar", TitleBar);
customElements.define("menu-bar", MenuBar);
customElements.define("tree-row", TreeRow);
customElements.define("file-panel", FilePanel);
customElements.define("data-panel", DataPanel);
customElements.define("combo-box", ComboBox);
customElements.define("main-toolbar", MainToolbar);
customElements.define("format-bar", FormatBar);
customElements.define("param-pane", ParamPane);
customElements.define("sheet-grid", SheetGrid);
customElements.define("status-bar", StatusBar);
customElements.define("side-strip", SideStrip);
customElements.define("property-panel", PropertyPanel);
customElements.define("report-designer", ReportDesigner);
</script>
</body>
</html>
